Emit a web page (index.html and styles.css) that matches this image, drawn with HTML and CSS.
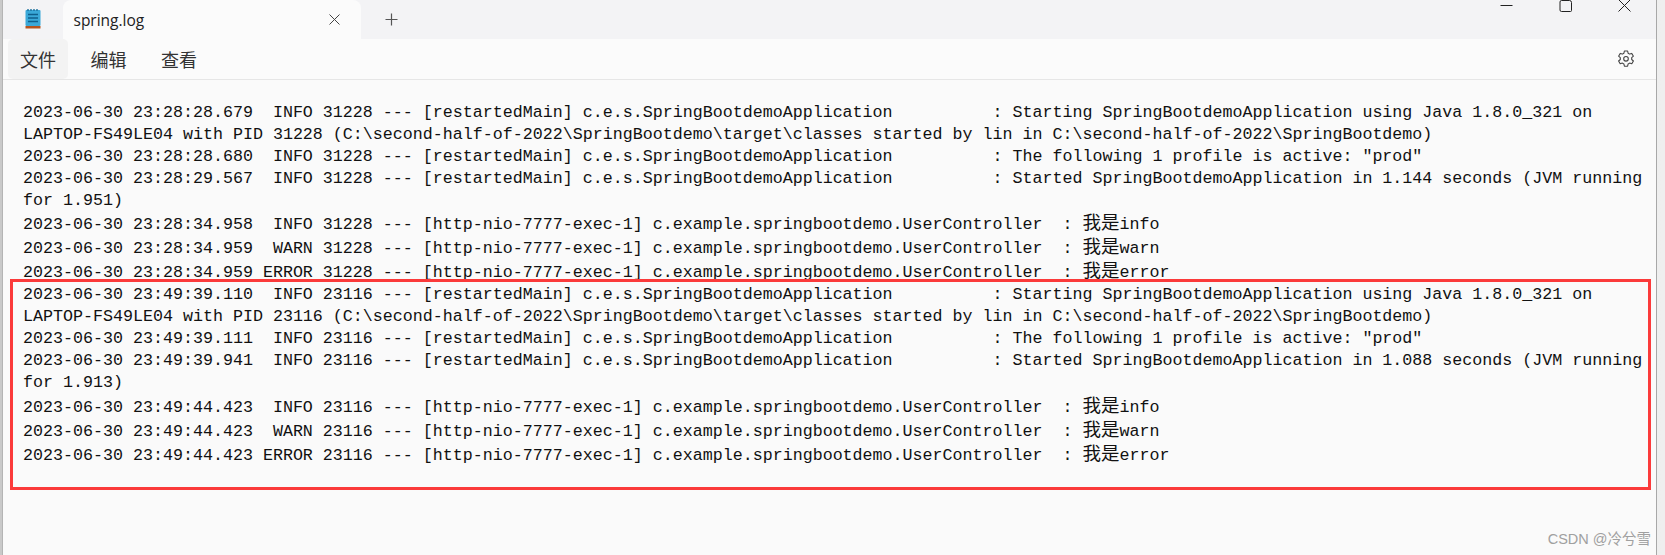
FILE: index.html
```html
<!DOCTYPE html>
<html lang="zh">
<head>
<meta charset="utf-8">
<title>spring.log</title>
<link rel="stylesheet" href="styles.css">
</head>
<body>
<div class="window">
  <header class="titlebar">
    <div class="app-icon">
      <svg width="16" height="21" viewBox="0 0 16 21">
        <rect x="0.5" y="2" width="15" height="16" rx="1" fill="#3aa8d8"/>
        <rect x="0.5" y="18" width="15" height="2.5" fill="#b5541f"/>
        <path d="M3 1v2M6 1v2M9 1v2M12 1v2" stroke="#1b6f9c" stroke-width="1.4"/>
        <path d="M3 6.5h10M3 10h10M3 13.5h10" stroke="#0f5f8c" stroke-width="1.6"/>
      </svg>
    </div>
    <div class="tab">
      <span class="tab-title">spring.log</span>
      <svg class="tab-close" width="11" height="11" viewBox="0 0 11 11"><path d="M0.5 0.5l10 10M10.5 0.5l-10 10" stroke="#444" stroke-width="1" fill="none"/></svg>
    </div>
    <svg class="tab-add" width="13" height="13" viewBox="0 0 13 13"><path d="M6.5 0.5v12M0.5 6.5h12" stroke="#555" stroke-width="1.2" fill="none"/></svg>
    <div class="controls">
      <svg width="13" height="12" viewBox="0 0 13 12"><path d="M0.5 5.5h12" stroke="#222" stroke-width="1" fill="none"/></svg>
      <svg width="13" height="12" viewBox="0 0 13 12"><path d="M2.5 0.5h8a2 2 0 0 1 2 2v8a1 1 0 0 1-1 1h-9a1.500 1.500 0 0 1-1.500-1.500v-8a1.500 1.500 0 0 1 1.500-1.500z" stroke="#222" stroke-width="1" fill="none"/></svg>
      <svg width="13" height="12" viewBox="0 0 13 12"><path d="M0.500-0.500l12 12M12.500-0.500l-12 12" stroke="#222" stroke-width="1" fill="none"/></svg>
    </div>
  </header>
  <nav class="menubar">
    <span class="menu-item active">文件</span>
    <span class="menu-item">编辑</span>
    <span class="menu-item">查看</span>
    <svg class="gear" width="18" height="18" viewBox="0 0 18 18">
      <path d="M7.400 1h3.200l.5 2.200 1.500.9 2.200-.7 1.600 2.800-1.700 1.500v1.800l1.700 1.500-1.600 2.800-2.200-.7-1.500.9-.5 2.200H7.400l-.5-2.200-1.500-.9-2.200.7L1.600 11l1.700-1.500V7.700L1.600 6.200l1.600-2.800 2.200.7 1.500-.9z" stroke="#444" stroke-width="1.100" stroke-linejoin="round" fill="none"/>
      <circle cx="9" cy="8.800" r="2.300" stroke="#444" stroke-width="1.100" fill="none"/>
    </svg>
  </nav>
  <main class="log">
    <div class="line">2023-06-30 23:28:28.679  INFO 31228 --- [restartedMain] c.e.s.SpringBootdemoApplication          : Starting SpringBootdemoApplication using Java 1.8.0_321 on LAPTOP-FS49LE04 with PID 31228 (C:\second-half-of-2022\SpringBootdemo\target\classes started by lin in C:\second-half-of-2022\SpringBootdemo)</div>
    <div class="line">2023-06-30 23:28:28.680  INFO 31228 --- [restartedMain] c.e.s.SpringBootdemoApplication          : The following 1 profile is active: "prod"</div>
    <div class="line">2023-06-30 23:28:29.567  INFO 31228 --- [restartedMain] c.e.s.SpringBootdemoApplication          : Started SpringBootdemoApplication in 1.144 seconds (JVM running for 1.951)</div>
    <div class="line cjk">2023-06-30 23:28:34.958  INFO 31228 --- [http-nio-7777-exec-1] c.example.springbootdemo.UserController  : <span class="zh">我是</span>info</div>
    <div class="line cjk">2023-06-30 23:28:34.959  WARN 31228 --- [http-nio-7777-exec-1] c.example.springbootdemo.UserController  : <span class="zh">我是</span>warn</div>
    <div class="line cjk">2023-06-30 23:28:34.959 ERROR 31228 --- [http-nio-7777-exec-1] c.example.springbootdemo.UserController  : <span class="zh">我是</span>error</div>
    <div class="line">2023-06-30 23:49:39.110  INFO 23116 --- [restartedMain] c.e.s.SpringBootdemoApplication          : Starting SpringBootdemoApplication using Java 1.8.0_321 on LAPTOP-FS49LE04 with PID 23116 (C:\second-half-of-2022\SpringBootdemo\target\classes started by lin in C:\second-half-of-2022\SpringBootdemo)</div>
    <div class="line">2023-06-30 23:49:39.111  INFO 23116 --- [restartedMain] c.e.s.SpringBootdemoApplication          : The following 1 profile is active: "prod"</div>
    <div class="line group-end">2023-06-30 23:49:39.941  INFO 23116 --- [restartedMain] c.e.s.SpringBootdemoApplication          : Started SpringBootdemoApplication in 1.088 seconds (JVM running for 1.913)</div>
    <div class="line cjk">2023-06-30 23:49:44.423  INFO 23116 --- [http-nio-7777-exec-1] c.example.springbootdemo.UserController  : <span class="zh">我是</span>info</div>
    <div class="line cjk">2023-06-30 23:49:44.423  WARN 23116 --- [http-nio-7777-exec-1] c.example.springbootdemo.UserController  : <span class="zh">我是</span>warn</div>
    <div class="line cjk">2023-06-30 23:49:44.423 ERROR 23116 --- [http-nio-7777-exec-1] c.example.springbootdemo.UserController  : <span class="zh">我是</span>error</div>
  </main>
  <div class="highlight"></div>
  <div class="watermark">CSDN @冷兮雪</div>
</div>
</body>
</html>
```

FILE: styles.css
```css
* { box-sizing: border-box; }
html, body { margin: 0; height: 100%; overflow: hidden; }
body {
  width: 1665px;
  height: 555px;
  padding: 0 9px 0 3px;
  background: linear-gradient(to right, #c9c9c9, #efefef);
  font-family: "Open Sans", "Noto Sans CJK SC", sans-serif;
}
.window {
  position: relative;
  height: 555px;
  display: flex;
  flex-direction: column;
  background: #fafafa;
  box-shadow: -1px 0 0 #b4b4b4, 1px 0 0 #a8a8a8;
}
.titlebar {
  display: flex;
  align-items: center;
  height: 39px;
  flex: none;
  background: #f3f3f5;
}
.app-icon { display: flex; margin-left: 22px; width: 38px; margin-top: -2px; }
.tab {
  display: flex;
  align-items: center;
  justify-content: space-between;
  width: 298px;
  height: 39px;
  padding: 0 21px 0 10.5px;
  background: #fbfbfb;
  border-radius: 8px 8px 0 0;
}
.tab-title { font-size: 15.5px; color: #222; }
.tab-add { margin-left: 24px; }
.controls {
  display: flex;
  align-items: flex-start;
  align-self: flex-start;
  gap: 46px;
  margin-left: auto;
  margin-right: 25px;
}
.menubar {
  display: flex;
  align-items: center;
  height: 41px;
  flex: none;
  padding: 0 21px 1px 5px;
  gap: 10.5px;
  background: #fbfbfb;
  border-bottom: 1px solid #e6e6e6;
  font-family: "Noto Sans CJK SC", sans-serif;
}
.menu-item {
  display: flex;
  align-items: center;
  justify-content: center;
  width: 60px;
  height: 40px;
  font-size: 18px;
  color: #333;
  border-radius: 5px;
}
.menu-item.active { background: #f3f3f3; }
.gear { margin-left: auto; }
.log {
  flex: 1;
  padding: 22px 0 0 20px;
  font-family: "Liberation Mono", "Noto Sans CJK SC", monospace;
  font-size: 16.67px;
  color: #111;
}
.line {
  white-space: pre-wrap;
  line-height: 22px;
  width: 1630px;
}
.line.cjk { line-height: 24px; padding-top: 1px; margin-bottom: -1px; }
.line.group-end { margin-bottom: 1px; }
.zh { font-size: 18.5px; line-height: 0; }
.highlight {
  position: absolute;
  left: 7px;
  top: 279px;
  width: 1641px;
  height: 211px;
  border: 3px solid #fb3a3a;
}
.watermark {
  position: absolute;
  right: 5px;
  bottom: 7px;
  font-family: "Liberation Sans", "Noto Sans CJK SC", sans-serif;
  font-size: 14.5px;
  color: #a0a0a0;
}
```
